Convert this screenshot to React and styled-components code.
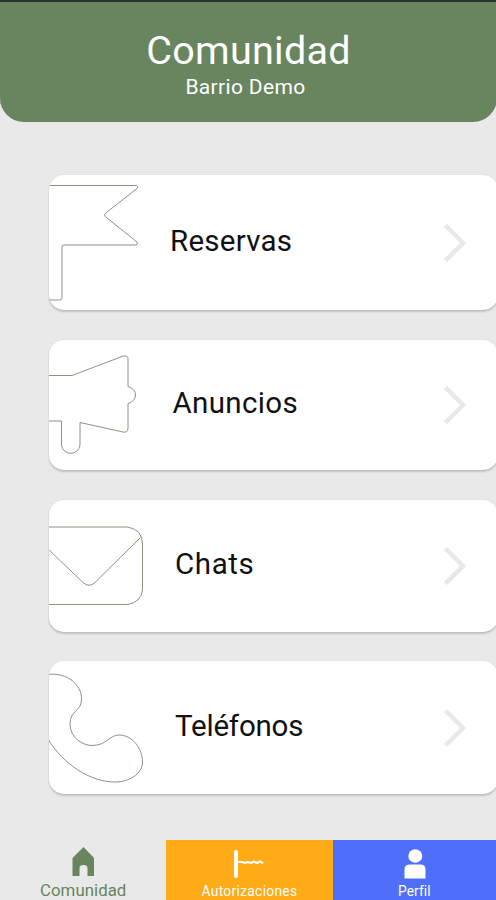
import React from 'react';
import styled, { createGlobalStyle } from 'styled-components';

const GlobalStyle = createGlobalStyle`
  * { box-sizing: border-box; }
  body { margin: 0; background: #e9e9e9; font-family: Roboto, "Liberation Sans", sans-serif; }
`;

const Screen = styled.div`
  width: 496px;
  height: 900px;
  overflow: hidden;
  display: flex;
  flex-direction: column;
  background: #e9e9e9;
`;

const Header = styled.header`
  height: 122px;
  flex: none;
  display: flex;
  flex-direction: column;
  align-items: center;
  margin: 0 -1px 0 0;
  padding-top: 28px;
  color: #fff;
  background: #68855f;
  border-radius: 0 0 24px 24px;
  box-shadow: inset 0 2px #26322a;
`;

const Title = styled.h1`
  margin: 0;
  font-size: 39.5px;
  font-weight: 400;
  line-height: 46px;
  letter-spacing: 0.25px;
`;

const Subtitle = styled.div`
  margin: -1px 6px 0 0;
  font-size: 21px;
  line-height: 28px;
  letter-spacing: 0.35px;
`;

const Menu = styled.main`
  flex: 1;
  display: flex;
  flex-direction: column;
  padding: 53px 0 0 49px;
`;

const Card = styled.button`
  display: flex;
  flex: none;
  width: 449px;
  height: ${(p) => p.$height}px;
  margin: 0 0 ${(p) => p.$gap}px;
  padding: 0;
  border: 0;
  border-radius: 15px;
  overflow: hidden;
  background: #fff;
  box-shadow: 0 2px 2px rgba(0, 0, 0, 0.17), 0 0 2px rgba(0, 0, 0, 0.07);
  font-family: inherit;
  text-align: left;
`;

const Drawing = styled.svg`
  flex: none;
  width: 110px;
  height: 100%;
  fill: none;
  stroke: #7c8974;
  stroke-width: 0.9;
  stroke-linejoin: round;
`;

const Label = styled.span`
  flex: 1;
  padding: ${(p) => p.$top}px 0 0 ${(p) => p.$left}px;
  font-size: 29.5px;
  line-height: 34px;
  letter-spacing: ${(p) => p.$spacing}px;
  color: #111;
`;

const Chevron = styled.svg`
  flex: none;
  width: 26px;
  height: 42px;
  margin: ${(p) => p.$top}px 29px 0 0;
  fill: none;
  stroke: #e8e8e8;
  stroke-width: 4.5;
`;

const Tabs = styled.nav`
  display: grid;
  grid-template-columns: 166.4px 166.2px 1fr;
  flex: none;
  height: 60.4px;
`;

const Tab = styled.a`
  display: flex;
  flex-direction: column;
  align-items: center;
  color: ${(p) => p.$color};
  background: ${(p) => p.$background};
`;

const TabIcon = styled.svg`
  flex: none;
  width: 40px;
  height: 40px;
  fill: currentColor;
`;

const TabLabel = styled.span`
  font-size: ${(p) => p.$size}px;
  line-height: 20px;
  margin-top: ${(p) => p.$top}px;
  letter-spacing: ${(p) => p.$spacing}px;
`;

const items = [
  {
    label: 'Reservas', height: 135, gap: 30, top: 49, left: 11, spacing: 0.25, chevron: 47,
    drawing: <path d="M-1 10.5H87.5Q90 11 88 13.5L56.5 38.2Q54.5 40 56.5 41.8L88 67Q89.5 69.5 87 70H15Q13 70 13 72V122.5Q13 125 10.5 125H2Q0 125-1 123" />,
  },
  {
    label: 'Anuncios', height: 130, gap: 30, top: 46, left: 13.5, spacing: 0.35, chevron: 44,
    drawing: <path d="M-1 35.5H23L73.5 16.3Q79 14.8 79 19V46.5Q86.5 49 86.5 55T79 63.5V88Q79 93 74 92L31 82.5V105A9.3 9.3 0 0 1 12.5 105V81H-1" />,
  },
  {
    label: 'Chats', height: 132, gap: 29, top: 47, left: 16, spacing: 0.6, chevron: 45,
    drawing: <path d="M-1 27H78Q93.5 29 93.5 44V90Q92 102 79 104.5H-1M-1 49L34 82.5Q40 88 46 82.5L91.5 37.5" />,
  },
  {
    label: 'Teléfonos', height: 133, gap: 0, top: 48, left: 16, spacing: -0.2, chevron: 46,
    drawing: <path d="M-1 13.5C18 11 33 24 32.5 38C32.5 51 21 49 21 63C21 77 34 84.5 43 84.5C58 84.5 60 74 70 74C83 74 93.5 87 93.5 101C93.5 113 80 121 66 121C41 121 14 103-1 78" />,
  },
];

const tabs = [
  {
    label: 'Comunidad', color: '#68855f', background: 'transparent', size: 16.8, top: 0, spacing: 0.05,
    icon: <path d="M20.5 7L31 18V36H24.5V28Q24.5 25 20.5 25T16.5 28V36H9.5V18Z" />,
  },
  {
    label: 'Autorizaciones', color: '#fff', background: '#fdab17', size: 13.8, top: 1, spacing: 0.3,
    icon: (
      <>
        <rect x="5" y="10" width="4" height="28" rx="2" />
        <path d="M8 22H13L16 23L19 22L22 23L25 21.5L28 23L31 21.5L34 23" fill="none" stroke="currentColor" strokeWidth="2.2" strokeLinejoin="round" />
      </>
    ),
  },
  {
    label: 'Perfil', color: '#fff', background: '#4f6ffb', size: 13.8, top: 1, spacing: 0.05,
    icon: (
      <>
        <ellipse cx="21.3" cy="16" rx="7" ry="6.8" />
        <path d="M10.5 38.5V29.5Q10.5 24.5 16 24.5H26.5Q31.5 24.5 31.5 29.5V38.5Z" />
      </>
    ),
  },
];

export default function App() {
  return (
    <>
      <GlobalStyle />
      <Screen>
        <Header>
          <Title>Comunidad</Title>
          <Subtitle>Barrio Demo</Subtitle>
        </Header>
        <Menu>
          {items.map((item) => (
            <Card key={item.label} $height={item.height} $gap={item.gap}>
              <Drawing viewBox={`0 0 110 ${item.height}`}>{item.drawing}</Drawing>
              <Label $top={item.top} $left={item.left} $spacing={item.spacing}>{item.label}</Label>
              <Chevron viewBox="0 0 26 42" $top={item.chevron}>
                <path d="M2.5 3.5L20 21L2.5 38.5" />
              </Chevron>
            </Card>
          ))}
        </Menu>
        <Tabs>
          {tabs.map((tab) => (
            <Tab key={tab.label} $color={tab.color} $background={tab.background}>
              <TabIcon viewBox="0 0 40 40">{tab.icon}</TabIcon>
              <TabLabel $size={tab.size} $top={tab.top} $spacing={tab.spacing}>{tab.label}</TabLabel>
            </Tab>
          ))}
        </Tabs>
      </Screen>
    </>
  );
}
